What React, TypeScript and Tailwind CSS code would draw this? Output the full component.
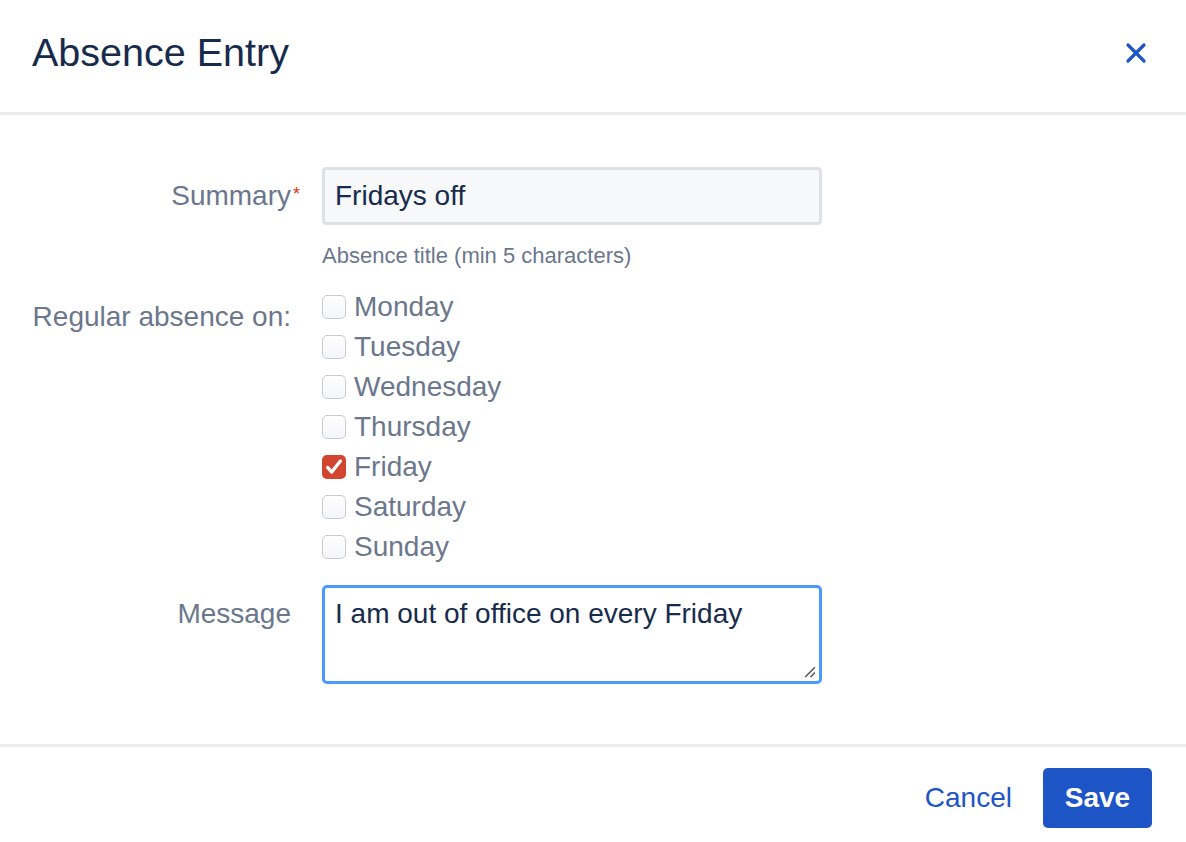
import { useState } from 'react';

const DAYS = ['Monday', 'Tuesday', 'Wednesday', 'Thursday', 'Friday', 'Saturday', 'Sunday'];

function Check({ checked }: { checked: boolean }) {
  if (checked) {
    return (
      <span className="flex h-[24px] w-[24px] shrink-0 items-center justify-center rounded-[5px] bg-[#d2452f]">
        <svg viewBox="0 0 24 24" className="h-[22px] w-[22px]" fill="none" stroke="white" strokeWidth={3.6} strokeLinecap="round" strokeLinejoin="round">
          <path d="M5 12.5l4.5 5L19 5.5" />
        </svg>
      </span>
    );
  }
  return <span className="h-[24px] w-[24px] shrink-0 rounded-[5px] border border-[#c9cbd0] bg-gradient-to-b from-white to-[#f4f5f7]" />;
}

export default function App() {
  const [days] = useState<string[]>(['Friday']);

  return (
    <div className="flex h-[842px] w-[1186px] flex-col bg-white font-['Liberation_Sans',Arial,sans-serif] text-[#6b778c]">
      {/* Header */}
      <div className="flex h-[115px] shrink-0 items-center justify-between border-b-[3px] border-[#ebecf0] pb-[6px] pl-[32px] pr-[38px]">
        <h1 className="text-[39.5px] leading-none text-[#172b4d]">Absence Entry</h1>
        <button className="flex h-[24px] w-[24px] items-center justify-center">
          <svg viewBox="0 0 24 24" className="h-[24px] w-[24px]" fill="none" stroke="#1d54c6" strokeWidth={3.2} strokeLinecap="round">
            <path d="M4 4l16 16M20 4L4 20" />
          </svg>
        </button>
      </div>

      {/* Body */}
      <div className="flex-1 pt-[52px] pl-[32px]">
        <div className="grid grid-cols-[259px_500px] gap-x-[31px]">
          <div className="flex h-[58px] items-center justify-end text-[28px]">
            <span className="relative">
              Summary
              <span className="absolute left-full top-[10px] pl-[2px] text-[18px] leading-none text-[#de350b]">*</span>
            </span>
          </div>
          <div>
            <div className="flex h-[58px] items-center rounded-[4px] border-[3px] border-[#dfe1e6] bg-[#f7f8fa] pl-[10px] text-[28px] text-[#172b4d]">
              Fridays off
            </div>
            <div className="mt-[19px] text-[22px] leading-[24px]">Absence title (min 5 characters)</div>
          </div>

          <div className="mt-[19px] flex justify-end pt-[10px] text-[28px] leading-[40px]">Regular absence on:</div>
          <div className="mt-[19px] flex flex-col">
            {DAYS.map(d => (
              <label key={d} className="flex h-[40px] items-center gap-[8px] text-[28px]">
                <Check checked={days.includes(d)} />
                <span>{d}</span>
              </label>
            ))}
          </div>

          <div className="mt-[18px] flex justify-end pt-[9px] text-[28px] leading-[40px]">Message</div>
          <div className="relative mt-[18px] h-[99px] rounded-[5px] border-[3px] border-[#4c9aff] bg-white pl-[10px] pt-[10px] text-[28px] leading-[32px] text-[#172b4d]">
            I am out of office on every Friday
            <svg viewBox="0 0 12 12" className="absolute bottom-[3px] right-[3px] h-[13px] w-[13px]" stroke="#555" strokeWidth={1.4}>
              <path d="M11 2L2 11M11 7L7 11" />
            </svg>
          </div>
        </div>
      </div>

      {/* Footer */}
      <div className="flex h-[98px] shrink-0 items-start justify-end gap-[31px] border-t-[3px] border-[#ebecf0] pt-[21px] pr-[34px]">
        <button className="h-[60px] text-[28px] text-[#1d54c6]">Cancel</button>
        <button className="h-[60px] w-[109px] rounded-[5px] bg-[#1d54c6] text-[28px] font-bold text-white">Save</button>
      </div>
    </div>
  );
}
